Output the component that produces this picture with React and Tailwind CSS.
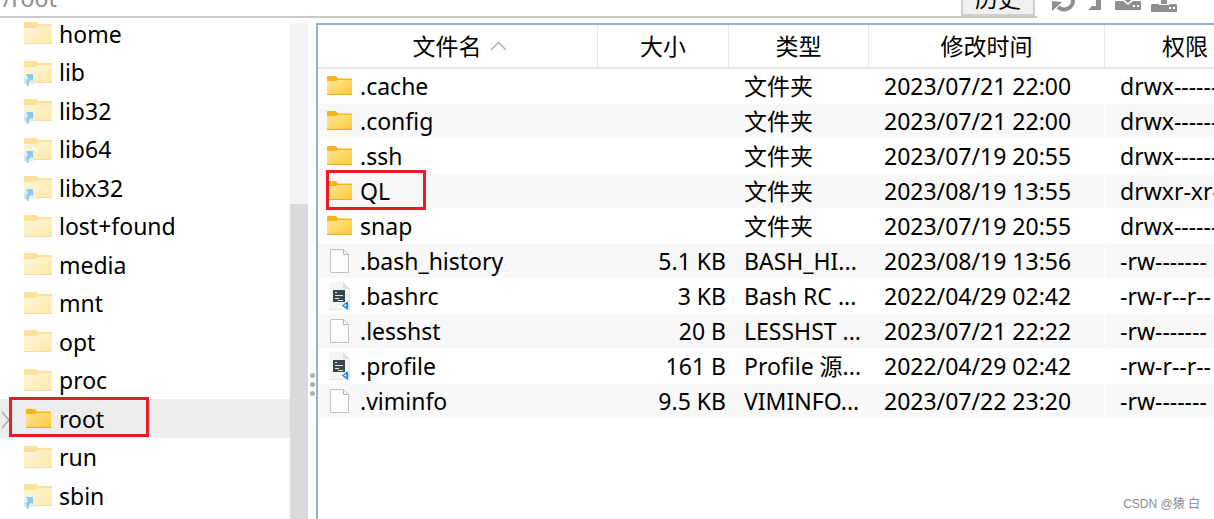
import { useState } from 'react';

const folders = [
  { name: 'home' },
  { name: 'lib', link: true },
  { name: 'lib32', link: true },
  { name: 'lib64', link: true },
  { name: 'libx32', link: true },
  { name: 'lost+found' },
  { name: 'media' },
  { name: 'mnt' },
  { name: 'opt' },
  { name: 'proc' },
  { name: 'root' },
  { name: 'run' },
  { name: 'sbin', link: true },
];

const files = [
  { name: '.cache', icon: 'folder', size: '', type: '文件夹', date: '2023/07/21 22:00', mode: 'drwx------' },
  { name: '.config', icon: 'folder', size: '', type: '文件夹', date: '2023/07/21 22:00', mode: 'drwx------' },
  { name: '.ssh', icon: 'folder', size: '', type: '文件夹', date: '2023/07/19 20:55', mode: 'drwx------' },
  { name: 'QL', icon: 'folder', size: '', type: '文件夹', date: '2023/08/19 13:55', mode: 'drwxr-xr-x', marked: true },
  { name: 'snap', icon: 'folder', size: '', type: '文件夹', date: '2023/07/19 20:55', mode: 'drwx------' },
  { name: '.bash_history', icon: 'file', size: '5.1 KB', type: 'BASH_HI...', date: '2023/08/19 13:56', mode: '-rw-------' },
  { name: '.bashrc', icon: 'script', size: '3 KB', type: 'Bash RC ...', date: '2022/04/29 02:42', mode: '-rw-r--r--' },
  { name: '.lesshst', icon: 'file', size: '20 B', type: 'LESSHST ...', date: '2023/07/21 22:22', mode: '-rw-------' },
  { name: '.profile', icon: 'script', size: '161 B', type: 'Profile 源...', date: '2022/04/29 02:42', mode: '-rw-r--r--' },
  { name: '.viminfo', icon: 'file', size: '9.5 KB', type: 'VIMINFO...', date: '2023/07/22 23:20', mode: '-rw-------' },
];

const FolderIcon = () => (
  <svg width="25" height="20" viewBox="0 0 25 20" className="shrink-0">
    <defs>
      <linearGradient id="folder" x1="0" y1="0" x2="1" y2="1">
        <stop offset="0" stopColor="#ffe69a" />
        <stop offset="1" stopColor="#ffc937" />
      </linearGradient>
    </defs>
    <path d="M0 1a1 1 0 0 1 1-1h8l2 2.500h13a1 1 0 0 1 1 1V8H0z" fill="#f9b518" />
    <path d="M0 5h9l2-1H25v14a1 1 0 0 1-1 1H1a1 1 0 0 1-1-1z" fill="url(#folder)" />
    <path d="M0 18.500h25" stroke="#e8ab2c" />
  </svg>
);

const PaleFolderIcon = ({ link }) => (
  <svg width="28" height="26" viewBox="0 0 28 26" className="shrink-0">
    <defs>
      <linearGradient id="pale" x1="0" y1="0" x2="1" y2="1">
        <stop offset="0" stopColor="#fff6da" />
        <stop offset="1" stopColor="#ffe9a8" />
      </linearGradient>
    </defs>
    <path d="M0 0h12.500l1.500 2H28v4H0z" fill="#fde09a" />
    <path d="M0 6h12l2-2h14v18H0z" fill="url(#pale)" />
    <path d="M0 21.500h28" stroke="#f4dca8" />
    {link && (
      <>
        <path d="M0 14h10v9H0z" fill="#e3eff2" />
        <path d="M2 13h7v7l-2-1c-2 1-2.500 3-2.500 6H3c-1.500-3-1-6 1-8z" fill="#86ccf5" />
        <path d="M1 18h2v5H1z" fill="#bcdcf0" />
      </>
    )}
  </svg>
);

const FileIcon = () => (
  <svg width="25" height="26" viewBox="0 0 25 26" fill="none" className="shrink-0">
    <path d="M3.500 1.500h13l5 5v18h-18z" fill="#fdfdfd" stroke="#c2c2c2" />
    <path d="M16.500 1.500v5h5" stroke="#b5b5b5" />
  </svg>
);

const ScriptIcon = () => (
  <svg width="25" height="28" viewBox="0 0 25 28" fill="none" className="shrink-0">
    <path d="M2 0h14l7 7v21H2z" fill="#f4f5f5" />
    <path d="M16 0v7h7z" fill="#dcdedf" />
    <path d="M22.500 7v20.500H2" stroke="#e3e4e5" />
    <path d="M6 8h12v12H6z" fill="#37474f" />
    <path d="M8 10.500h2M8 13.500h8M8 16.500h4M11 18.500h5" stroke="#dfe5e8" />
    <path d="M16 23.500l4-3v6zM20.500 21v5" stroke="#1f8ad2" strokeWidth="1.500" />
  </svg>
);

const fileIcons = { folder: FolderIcon, file: FileIcon, script: ScriptIcon };

const headCell = 'h-[44px] border-b-2 border-r border-[#e6e6e6] p-0 font-normal text-center';
const bodyCell = 'h-[35px] border-b border-white p-0 whitespace-nowrap overflow-hidden';

const Toolbar = () => (
  <header className="flex h-[18px] shrink-0 items-end overflow-hidden">
    <div className="flex min-w-0 flex-1 items-end border-b-2 border-[#cacaca]">
      <input
        aria-label="路径"
        defaultValue="/root"
        className="h-8 min-w-0 flex-1 bg-transparent pb-1 pl-[3px] text-[#8c8c8c] outline-none"
      />
      <button className="mr-[2px] flex h-9 w-[74px] items-end justify-center border-2 border-[#cfcfcf] bg-[#f0f0f0] leading-[32px]">历史</button>
    </div>
    <div className="flex w-[177px] shrink-0 items-end pb-[6px] pl-[15px]">
      <button aria-label="刷新" className="mr-3">
        <svg width="24" height="24" viewBox="0 0 24 24" fill="none" stroke="#8f8f8f" strokeWidth="4">
          <path d="M4 10a8.500 8.500 0 0 1 15-4M21 12a9 9 0 0 1-15 7" />
          <path d="M0 13l10 1-10 9zM24 11l-10-1 10-9z" fill="#8f8f8f" stroke="none" />
        </svg>
      </button>
      <button aria-label="上级目录" className="mr-[14px]">
        <svg width="13" height="24" viewBox="0 0 13 24" fill="#8f8f8f">
          <path d="M8 0h5v22H0l4-4h4z" />
        </svg>
      </button>
      <button aria-label="下载" className="mr-[10px]">
        <svg width="26" height="24" viewBox="0 0 26 24" fill="#8f8f8f">
          <path d="M1 13h7l5 4 5-4h7l1 1v8H0v-8z" />
          <path d="M10 4h6v6h3l-6 5-6-5h3z" />
          <path d="M18 17h2v2h-2zM22 17h2v2h-2z" fill="#fff" />
        </svg>
      </button>
      <button aria-label="上传">
        <svg width="26" height="24" viewBox="0 0 26 24" fill="#8f8f8f">
          <path d="M1 16h7v1h10v-1h7l1 1v7H0v-7z" />
          <path d="M10 8h6v8h-6z" />
          <path d="M18 19h2v2h-2zM22 19h2v2h-2z" fill="#fff" />
        </svg>
      </button>
    </div>
  </header>
);

const FolderTree = ({ selected, onSelect }) => (
  <nav className="flex w-[308px] shrink-0 overflow-hidden">
    <ul className="-mt-1 min-w-0 flex-1">
      {folders.map((f) => (
        <li key={f.name} className={`relative odd:h-[39px] even:h-[38px] ${f.name === selected ? 'bg-[#ededed]' : ''}`}>
          <button onClick={() => onSelect(f.name)} className="flex h-full w-full items-center pl-6 text-left">
            <span className="flex w-[35px] shrink-0">
              {f.name === selected ? (
                <span className="pl-[2px]"><FolderIcon /></span>
              ) : (
                <span className="pt-[3px]"><PaleFolderIcon link={f.link} /></span>
              )}
            </span>
            <span>{f.name}</span>
          </button>
          {f.name === selected && (
            <>
              <svg width="10" height="18" viewBox="0 0 10 18" fill="none" className="absolute top-3 left-0">
                <path d="M2 1l7 8-7 8" stroke="#a9a9a9" strokeWidth="1.500" />
              </svg>
              <span className="pointer-events-none absolute -top-[2px] left-[9px] h-10 w-[140px] border-3 border-[#ed1c24]" />
            </>
          )}
        </li>
      ))}
    </ul>
    {/* Scrollbar */}
    <div className="mt-[5px] flex w-[18px] shrink-0 flex-col bg-[#f3f3f3]">
      <div className="mt-[181px] flex-1 bg-[#dadada]" />
    </div>
  </nav>
);

const FileTable = () => (
  <table className="w-full table-fixed border-separate border-spacing-0">
    <colgroup>
      <col className="w-[280px]" />
      <col className="w-[131px]" />
      <col className="w-[140px]" />
      <col className="w-[236px]" />
      <col />
    </colgroup>
    <thead>
      <tr>
        <th className={headCell}>
          <span className="flex items-center justify-center gap-2 pl-1">
            文件名
            <svg width="17" height="10" viewBox="0 0 17 10" fill="none">
              <path d="M1 9l7.500-7.500L16 9" stroke="#b0b0b0" strokeWidth="1.500" />
            </svg>
          </span>
        </th>
        <th className={headCell}>大小</th>
        <th className={headCell}>类型</th>
        <th className={headCell}>修改时间</th>
        <th className="border-b-2 border-[#e6e6e6] p-0 pr-[6px] text-right font-normal whitespace-nowrap">权限</th>
      </tr>
    </thead>
    <tbody>
      {files.map((f) => {
        const Icon = fileIcons[f.icon];
        return (
          <tr key={f.name} className="even:bg-[#f8f8f8]">
            <td className="relative h-[35px] border-b border-white p-0">
              <span className="flex h-[34px] items-center gap-2 pl-[9px]">
                <Icon />
                <span>{f.name}</span>
              </span>
              {f.marked && (
                <span className="pointer-events-none absolute -top-1 left-2 h-10 w-[100px] border-3 border-[#ed1c24]" />
              )}
            </td>
            <td className={`${bodyCell} text-right`}><span className="pr-[3px]">{f.size}</span></td>
            <td className={bodyCell}><span className="pl-[15px]">{f.type}</span></td>
            <td className={`${bodyCell} border-r`}><span className="pl-[15px]">{f.date}</span></td>
            <td className="border-b border-white p-0 pl-[15px] whitespace-nowrap">{f.mode}</td>
          </tr>
        );
      })}
    </tbody>
  </table>
);

const App = () => {
  const [selected, setSelected] = useState('root');

  return (
    <div className="relative flex h-screen flex-col overflow-hidden bg-white font-['Noto_Sans','Noto_Sans_CJK_SC',sans-serif] text-[23px] leading-[32px] text-black">
      <Toolbar />
      <div className="flex min-h-0 flex-1">
        <FolderTree selected={selected} onSelect={setSelected} />
        {/* Splitter grip */}
        <div className="flex w-2 shrink-0 flex-col items-center gap-1 pt-[355px]">
          <span className="size-[5px] rounded-full bg-[#b0b0b0]" />
          <span className="size-[5px] rounded-full bg-[#b0b0b0]" />
          <span className="size-[5px] rounded-full bg-[#b0b0b0]" />
        </div>
        <main className="mt-[5px] min-w-0 flex-1 overflow-hidden border-t-2 border-l-2 border-[#8fb3d9]">
          <FileTable />
        </main>
      </div>
      <p className="absolute right-[14px] bottom-[5px] font-['Liberation_Sans','Noto_Sans_CJK_SC',sans-serif] text-[12px] leading-5 text-[#8c8c8c]">
        CSDN @猿 白
      </p>
    </div>
  );
};

export default App;
